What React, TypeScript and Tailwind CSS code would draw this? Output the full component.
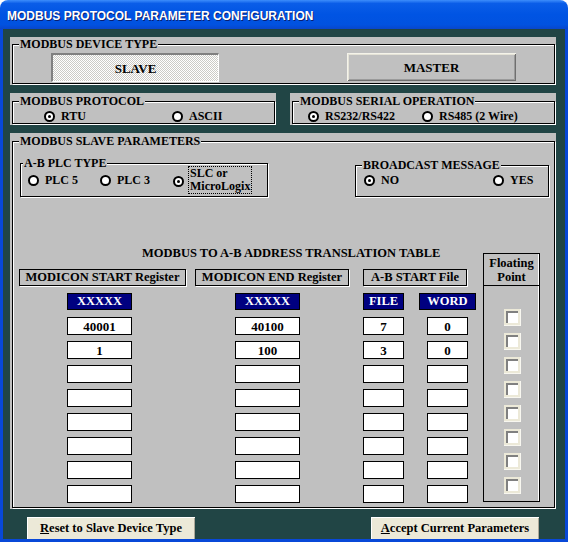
import React from 'react';

const serif = "font-['Liberation_Serif','Times_New_Roman',serif]";

function Radio({ on = false }: { on?: boolean }) {
  return (
    <span className="flex h-[11px] w-[11px] shrink-0 items-center justify-center rounded-full border-2 border-black bg-white">
      {on && <span className="h-[3px] w-[3px] rounded-full bg-black" />}
    </span>
  );
}

function Option({ label, on = false, className = '' }: { label: string; on?: boolean; className?: string }) {
  return (
    <div className={`flex items-center gap-[6px] whitespace-nowrap ${className}`}>
      <Radio on={on} />
      <span>{label}</span>
    </div>
  );
}

interface GroupProps {
  title: string;
  className?: string;
  legendClass?: string;
  children?: React.ReactNode;
}

function Group({ title, className = '', legendClass = 'ml-[6px]', children }: GroupProps) {
  return (
    <fieldset className={`shrink-0 border border-black shadow-[inset_1px_1px_0_#fff,1px_1px_0_#fff] ${className}`}>
      <legend className={`${legendClass} whitespace-nowrap bg-[#c0c0c0] px-px text-[12px] leading-[12px] font-bold`}>
        {title}
      </legend>
      {children}
    </fieldset>
  );
}

function HeaderBox({ label, className = '' }: { label: string; className?: string }) {
  return (
    <div className={`flex h-[17px] items-center justify-center whitespace-nowrap border border-black text-[12.5px] shadow-[1px_1px_0_#fff] ${className}`}>
      {label}
    </div>
  );
}

function Cell({ value, className = '' }: { value: string; className?: string }) {
  return (
    <div className={`flex h-[18px] items-center justify-center border border-black bg-white text-[13px] ${className}`}>
      {value}
    </div>
  );
}

function Blue({ label, className = '' }: { label: string; className?: string }) {
  return (
    <div className={`flex h-[17px] items-center justify-center border border-black bg-[#000080] text-[12.5px] text-white ${className}`}>
      {label}
    </div>
  );
}

function Check() {
  return (
    <div className="h-[17px] w-[17px] bg-[#ece9d8] pb-[3px] pl-[2px] pr-[3px] pt-[2px] shadow-[inset_-1px_-1px_0_#f8f7f0]">
      <div className="h-full w-full border-l-2 border-t-2 border-l-[#808080] border-t-[#808080] bg-white" />
    </div>
  );
}

const rows = [
  { start: '40001', end: '40100', file: '7', word: '0' },
  { start: '1', end: '100', file: '3', word: '0' },
  { start: '', end: '', file: '', word: '' },
  { start: '', end: '', file: '', word: '' },
  { start: '', end: '', file: '', word: '' },
  { start: '', end: '', file: '', word: '' },
  { start: '', end: '', file: '', word: '' },
  { start: '', end: '', file: '', word: '' },
];

export default function App() {
  return (
    <div className="flex h-[542px] w-[568px] flex-col bg-white">
      {/* title bar */}
      <div className="flex h-[29px] shrink-0 items-center rounded-t-[8px] bg-[linear-gradient(180deg,#3d8dfb_0%,#0a5de8_12%,#0054e3_50%,#0152e0_85%,#0846cc_100%)] pl-[7px] pt-[2px]">
        <span className="font-['Liberation_Sans',Arial,sans-serif] text-[12px] font-bold text-white [text-shadow:1px_1px_0_#0a1e6e]">
          MODBUS PROTOCOL PARAMETER CONFIGURATION
        </span>
      </div>

      <div
        className={`flex flex-1 flex-col border-x-[3px] border-b-[3px] border-[#0848d8] bg-[#214545] pl-[7px] pr-[9px] pt-[8px] ${serif} text-[12px] font-bold leading-[13px] text-black`}
      >
        {/* device type */}
        <div className="h-[48px] shrink-0 bg-[#c0c0c0] pl-[2px] pr-[1px] pt-[1px]">
          <Group title="MODBUS DEVICE TYPE" className="h-[46px]">
            <div className="mt-[3px] flex">
              <div className="ml-[38px] flex h-[29px] w-[168px] items-center justify-center border-b border-l-2 border-r border-t-2 border-b-white border-l-[#808080] border-r-white border-t-[#808080] bg-[image:repeating-conic-gradient(#ffffff_0_25%,#cbcbc6_0_50%)] bg-[length:2px_2px] text-[13px]">
                SLAVE
              </div>
              <div className="ml-[128px] flex h-[28px] w-[169px] items-center justify-center bg-[#c0c0c0] text-[13px] shadow-[inset_1px_1px_0_#f4f3ea,inset_-1px_-1px_0_#6f6f6f,inset_2px_2px_0_#e4e2d6,inset_-2px_-2px_0_#9a9a9a]">
                MASTER
              </div>
            </div>
          </Group>
        </div>

        {/* protocol + serial */}
        <div className="mt-[8px] flex shrink-0 gap-[14px]">
          <div className="h-[32px] w-[266px] bg-[#c0c0c0] pl-[2px] pr-[1px] pt-[2px]">
            <Group title="MODBUS PROTOCOL" className="h-[29px]">
              <div className="mt-[3px] flex h-[13px] items-center">
                <Option on label="RTU" className="ml-[31px] w-[128px]" />
                <Option label="ASCII" />
              </div>
            </Group>
          </div>
          <div className="h-[32px] w-[266px] bg-[#c0c0c0] pl-[2px] pr-[1px] pt-[2px]">
            <Group title="MODBUS SERIAL OPERATION" className="h-[29px]">
              <div className="mt-[3px] flex h-[13px] items-center">
                <Option on label="RS232/RS422" className="ml-[15px] w-[114px]" />
                <Option label="RS485 (2 Wire)" />
              </div>
            </Group>
          </div>
        </div>

        {/* slave parameters */}
        <div className="mt-[8px] h-[376px] shrink-0 bg-[#c0c0c0] pl-[2px] pr-[1px] pt-[2px]">
          <Group title="MODBUS SLAVE PARAMETERS" className="h-[373px]">
            <div className="flex items-start">
              <Group title="A-B PLC TYPE" legendClass="ml-[2px]" className="ml-[7px] mt-[10px] h-[40px] w-[248px]">
                <div className="-mt-[3px] flex h-[28px] items-center">
                  <Option label="PLC 5" className="ml-[7px] w-[72px]" />
                  <Option label="PLC 3" className="w-[73px]" />
                  <div className="flex items-center gap-[4px]">
                    <span className="mt-[2px]">
                      <Radio on />
                    </span>
                    <div className="flex flex-col whitespace-nowrap border border-dotted border-black px-px leading-[13px]">
                      <span>SLC or</span>
                      <span>MicroLogix</span>
                    </div>
                  </div>
                </div>
              </Group>
              <Group title="BROADCAST MESSAGE" className="ml-[87px] mt-[12px] h-[38px] w-[194px]">
                <div className="mt-[3px] flex h-[13px] items-center">
                  <Option on label="NO" className="ml-[8px] w-[129px]" />
                  <Option label="YES" />
                </div>
              </Group>
            </div>

            <div className="mt-[50px] flex items-start">
              <div className="ml-[6px] w-[464px]">
                <div className="ml-[123px] h-[12px] whitespace-nowrap text-[12.5px] leading-[12px]">
                  MODBUS TO A-B ADDRESS TRANSLATION TABLE
                </div>
                <div className="mt-[10px] flex">
                  <HeaderBox label="MODICON START Register" className="w-[167px]" />
                  <HeaderBox label="MODICON END Register" className="ml-[9px] w-[154px]" />
                  <HeaderBox label="A-B START File" className="ml-[14px] w-[104px]" />
                </div>
                <div className="mt-[7px] flex">
                  <Blue label="XXXXX" className="ml-[48px] w-[65px]" />
                  <Blue label="XXXXX" className="ml-[103px] w-[65px]" />
                  <Blue label="FILE" className="ml-[63px] w-[41px]" />
                  <Blue label="WORD" className="ml-[15px] w-[57px]" />
                </div>
                <div className="mt-[7px] flex flex-col gap-[6px]">
                  {rows.map((r, i) => (
                    <div key={i} className="flex">
                      <Cell value={r.start} className="ml-[48px] w-[65px]" />
                      <Cell value={r.end} className="ml-[103px] w-[65px]" />
                      <Cell value={r.file} className="ml-[63px] w-[41px]" />
                      <Cell value={r.word} className="ml-[23px] w-[41px]" />
                    </div>
                  ))}
                </div>
              </div>

              <div className="mt-[6px] h-[249px] w-[57px] shrink-0 border border-black shadow-[inset_-1px_0_0_#fff]">
                <div className="flex h-[32px] flex-col items-center justify-center border-b border-black text-[12.5px] leading-[14px]">
                  <span>Floating</span>
                  <span>Point</span>
                </div>
                <div className="ml-[20px] mt-[23px] flex flex-col gap-[7px]">
                  {rows.map((_, i) => (
                    <Check key={i} />
                  ))}
                </div>
              </div>
            </div>
          </Group>
        </div>

        {/* bottom buttons */}
        <div className="mt-[8px] flex flex-1 items-start text-[12.5px]">
          <button className="ml-[17px] flex h-[22px] w-[168px] items-center justify-center bg-[#ece9d8] pt-[1px] shadow-[inset_1px_1px_0_#fff,inset_-1px_0_0_#aca899]">
            <span>
              <span className="underline">R</span>eset to Slave Device Type
            </span>
          </button>
          <button className="ml-[176px] flex h-[22px] w-[168px] items-center justify-center bg-[#ece9d8] pt-[1px] shadow-[inset_1px_1px_0_#fff,inset_-1px_0_0_#aca899]">
            <span>
              <span className="underline">A</span>ccept Current Parameters
            </span>
          </button>
        </div>
      </div>
    </div>
  );
}
